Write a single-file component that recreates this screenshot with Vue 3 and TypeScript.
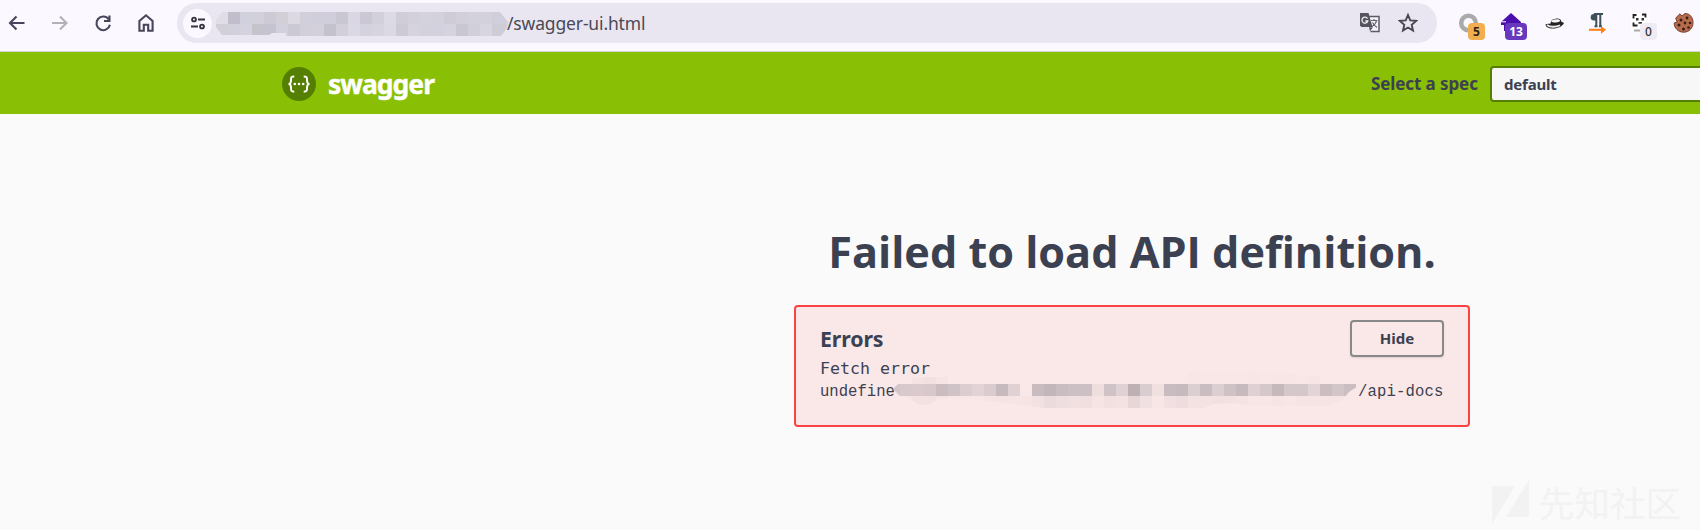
<script setup lang="ts">
interface Tile { x: number; y: number; c: string }

function row(start: number, y: number, colors: string): Tile[] {
  return colors.split(' ').map((c, i) => ({ x: start + i * 12, y, c: c === '-' ? 'none' : '#' + c }))
}

const hostTiles: Tile[] = [
  ...row(0, 0, 'e0dde7 c1bdca d0d1dc d2d0d8 cdcad5 d2cfd6 dcd9e3 d1cfda d0cedb d0cedb c9c7d2 d9d7e4 cbc8d3 d2d0da dcdae5 d0cdd9 d2d0da d4d2dd d3d1dc cfccd8 d1cfda d3d1dc d3d1dc d0ceda d0ceda'),
  ...row(0, 12, 'd2cfd7 d2d0da d3d2de c5c4cb c5c3cf d2d0dc cbc9d4 d2cfda d2d0db c4c2cd d2cfda dad8e5 d4d2dd d6d4df dbd9e4 cdcad5 d5d3dd d3d1dc d3d1de d5d3de c9c7d2 d1cfda d7d5df ceccd7 cfcdd9'),
]

const errorTiles: Tile[] = [
  ...row(0, 12, 'd3c5c9 d8c9cd dacacd d8c8cc cbbcc0 d0c3c7 dccdd0 e3d3d6 d9cbce c6babf e0d1d4 - c9bcc0 c3b6bb c9bdc1 cdc0c4 cdc0c4 efdede d0c3c7 e0d2d4 beb1b6 dacdd0 f0e0e0 c8bcc0 c7babe dccfd2 c9bdc1 dccfd2 cfc2c6 c7babe dfd1d3 d4c8cb c6b9bd d4c8cb d5c8cb e3d5d7 cbbec3 d3c6c9 cbbec3'),
  ...row(0, 24, '- f6e3e4 f3e0e1 f3e1e2 f6e3e4 f8e5e5 f8e5e5 f8e5e5 f6e3e4 f5e2e3 f6e4e4 f6e4e4 f3e1e1 ecdbdc efdedf f2e0e1 f0dfe0 f6e4e4 f2e0e1 f4e2e2 e6d6d8 f1e0e1 f8e5e5 f1dfe1 eedddf f4e2e3 f4e2e3 f1dfe1 f3e1e2 f5e2e3 f8e5e5 f8e5e5 f6e3e4 f8e5e5 f6e3e4 f6e4e4 f6e3e4 f6e3e3 f8e5e5'),
  ...row(24, 0, 'f5e2e3 f1dfe1 f6e3e4'),
  ...row(300, 0, 'f8e5e5 f9e6e6 f9e6e6 f9e6e6 f9e6e6 f8e5e5 f9e6e6 f8e5e5 f8e5e5 f9e6e6 f7e5e5'),
]
</script>

<template>
  <div class="page">
    <header class="toolbar">
      <nav class="nav">
        <svg class="ic" viewBox="0 0 20 20"><path d="M17.500 10H3.500M9.500 3.500 3 10l6.500 6.500" /></svg>
        <svg class="ic off" viewBox="0 0 20 20"><path d="M2 10h14M10 3.500 16.500 10 10 16.500" /></svg>
        <svg class="ic" viewBox="0 0 20 20"><path d="M15.700 6.300A6.800 6.800 0 1 0 16.900 11.700M16.500 2.500v5.500h-5.500" /></svg>
        <svg class="ic" viewBox="0 0 20 20"><path d="M3.400 17.800V8L10 2.300 16.600 8v9.800h-4.400v-6H7.800v6z" /></svg>
      </nav>
      <div class="address">
        <span class="site">
          <svg width="16" height="14" viewBox="0 0 16 14"><g fill="none" stroke="#34333f" stroke-width="1.900"><circle cx="4" cy="3.500" r="1.900" /><circle cx="12" cy="10.500" r="1.900" /><path d="M8 3.500h7M1 10.500h7" /></g></svg>
        </span>
        <svg class="host" width="292" height="28" viewBox="0 0 292 28">
          <defs><clipPath id="hostClip"><path d="M6 0H284l8 10-1 6-6 8H137V26H70V21H56l-3 2H6L0 15V8z" /></clipPath></defs>
          <g clip-path="url(#hostClip)" shape-rendering="crispEdges">
            <rect v-for="(t, i) in hostTiles" :key="i" :x="t.x" :y="t.y" width="12" height="12" :fill="t.c" />
          </g>
        </svg>
        <span class="path">/swagger-ui.html</span>
        <svg class="translate" width="22" height="22" viewBox="0 0 22 22">
          <path d="M9 4.500h11v15H11.500" fill="#f4f2f8" stroke="#5b5b65" stroke-width="1.500" />
          <path d="M1 1h8.500l4 14H2.500L1 13.500z" fill="#55545f" />
          <path d="M10 15.300h4l-3 4z" fill="#55545f" />
          <path d="M8.500 6.600A3 3 0 1 0 8.800 9H6.300" fill="none" stroke="#f1eff6" stroke-width="1.300" />
          <path d="M12 8.500h6.500M15 7v1.500M17.500 8.500c-.5 3-2 4.500-4.500 6M13.500 10.500c1 2 2.500 3.500 4.500 5" fill="none" stroke="#666570" stroke-width="1.200" />
        </svg>
        <svg class="star" width="20" height="20" viewBox="0 0 20 20"><path d="m10 2 2.300 5.400 5.800.5-4.400 3.900 1.300 5.700-5-3-5 3 1.300-5.700L1.900 7.900l5.800-.5z" fill="none" stroke="#474654" stroke-width="1.900" /></svg>
      </div>
      <div class="extensions">
        <div class="ext"><svg viewBox="0 0 22 22"><circle cx="10.500" cy="11" r="7.300" fill="none" stroke="#aaa" stroke-width="4.500" /></svg><b class="badge orange">5</b></div>
        <div class="ext"><svg viewBox="0 0 22 22"><path d="M10 1 20 10v3H17v6H3v-6H0v-3z" fill="#4b0fae" /><path d="M0 9.800h5" stroke="#fff" /></svg><b class="badge purple">13</b></div>
        <div class="ext"><svg viewBox="0 0 22 22"><path d="M1.500 12.500c2-1 4-.5 5-1 .5-3 2-5 4.500-4.500 3-1 6-.5 6.500 3 2 .3 2.500.8 2.300 1.500C18 14 15 16.500 9 16.500c-5 0-7.500-2-7.500-4z" fill="#232323" /><path d="M7.300 9.500c1-2 2-2 4-2 3-.5 4.500 0 5 1.500C14 10.500 9 11.500 7.300 9.500z" fill="#f5f5f5" /><path d="M3 13c3 2.300 9 2.300 13 .2" stroke="#ededed" stroke-width="1.800" fill="none" /></svg></div>
        <div class="ext"><svg viewBox="0 0 22 22"><path d="M9.500 2H7a3.300 3.300 0 0 0 0 6.600h2.500z" fill="#405058" /><path d="M7 2h9M9.300 2v12.500M13.300 2v12.500M7.500 14.300h3M12 14.300h3" fill="none" stroke="#405058" stroke-width="2" /><path d="M2 17.800h14" stroke="#ff7f11" stroke-width="2" /><path d="m14 13.900 5 3.900-5 3.900z" fill="#ff7f11" /></svg></div>
        <div class="ext"><svg viewBox="0 0 22 22"><path fill="#fff" d="M1 1h18v18H1z" /><path d="M3.500 6.500V3h3M12 2.500h3.500v3M3.500 10.500v3h4" fill="none" stroke="#222" stroke-width="1.800" /><path d="M4 18.500h6" stroke="#aaa" stroke-width="2" /><path d="M6 6h2.500v2.500H6zM11.500 6H14v2.500h-2.500zM8.500 10h3.500v1.800H8.500z" fill="#333" /></svg><b class="badge pale">0</b></div>
        <div class="ext"><svg viewBox="0 0 22 22"><path d="M7 1.800 9 4l3-2.500c5 0 8 4 8 9.200 0 5.500-4 9.500-9.300 9.500S1.200 16.300 1.200 11l3-1-1.500-4z" fill="#b96c4b" stroke="#70412f" /><g fill="#32201c"><circle cx="8" cy="8" r="1.500" /><circle cx="14" cy="6" r="1.400" /><circle cx="12" cy="11" r="1.400" /><circle cx="6" cy="13" r="1.500" /><circle cx="17" cy="11" r="1.300" /><circle cx="10.500" cy="17" r="1.500" /><circle cx="15.500" cy="15.500" r="1.300" /></g></svg></div>
      </div>
    </header>

    <div class="topbar">
      <div class="brand">
        <svg width="34" height="34" viewBox="0 0 34 34"><circle cx="17" cy="17" r="17" fill="#547f00" /><g fill="none" stroke="#fff" stroke-width="2"><path d="M12.300 9.500c-3 0-3.300.5-3.300 3.500 0 2.500-.5 4-2.500 4 2 0 2.500 1.500 2.500 4 0 3 .3 3.700 3.300 3.700M21.700 9.500c3 0 3.300.5 3.300 3.500 0 2.500.5 4 2.500 4-2 0-2.500 1.500-2.500 4 0 3-.3 3.700-3.300 3.700" /></g><g fill="#fff"><circle cx="12.800" cy="17" r="1.300" /><circle cx="17" cy="17" r="1.300" /><circle cx="21.200" cy="17" r="1.300" /></g></svg>
        <span class="brand-name">swagger</span>
      </div>
      <label class="spec"><span class="spec-label">Select a spec</span><span class="select">default</span></label>
    </div>

    <main class="content">
      <h4 class="title">Failed to load API definition.</h4>
      <section class="errors">
        <div class="errors-head">
          <h4 class="errors-title">Errors</h4>
          <button class="hide">Hide</button>
        </div>
        <div class="kind">Fetch error</div>
        <div class="message">
          <span class="mono">undefine</span>
          <svg class="redacted" width="468" height="36" viewBox="0 0 468 36">
            <defs><clipPath id="msgClip"><path d="M5 17 11 11 16 6 40 5H70V0H110V12H300V0H378L452 6V12H473L467 16 461 20 454 28 440 34H370L343 31 325 32 316 36H155L120 31 82 27H52L40 33 29 32 18 24H12z" /></clipPath></defs>
            <g clip-path="url(#msgClip)" shape-rendering="crispEdges">
              <rect v-for="(t, i) in errorTiles" :key="i" :x="t.x" :y="t.y" width="12" height="12" :fill="t.c" />
            </g>
          </svg>
          <span class="mono tail">/api-docs</span>
        </div>
      </section>
    </main>

    <div class="watermark">
      <svg width="38" height="44" viewBox="0 0 38 44"><path d="M0 6h23L0 44zM37 0v37H14z" fill="#f2f2f3" /></svg>
      <span>先知社区</span>
    </div>
  </div>
</template>

<style>
body { margin: 0; overflow: hidden; }
</style>

<style scoped>
.page { position: relative; width: 1700px; height: 530px; overflow: hidden; background: #fafafa; color: #3b4151; font-family: "Open Sans", sans-serif; }
.page * { box-sizing: border-box; }
.toolbar { display: flex; align-items: flex-start; height: 52px; padding-top: 3px; background: #fbf8ff; border-bottom: 1px solid #d5d2da; }
.nav { display: flex; gap: 23px; width: 177px; padding: 10px 0 0 7px; flex: none; }
.ic { width: 20px; height: 20px; fill: none; stroke: #47465a; stroke-width: 2.100; flex: none; }
.ic.off { stroke: #b3b1b8; }
.address { display: flex; align-items: center; width: 1260px; height: 40px; padding-left: 6px; border-radius: 20px; background: #e9e6f1; flex: none; }
.site { display: flex; align-items: center; justify-content: center; width: 29px; height: 29px; border-radius: 50%; background: #fbf8ff; }
.host { margin: 6px 0 0 4px; height: 28px; }
.path { flex: 1; font: 17.500px/24px "Noto Sans", sans-serif; letter-spacing: -.15px; color: #4b4956; margin-left: -1px; }
.translate { margin-right: 17px; }
.star { margin-right: 19px; }
.extensions { display: flex; gap: 21px; padding: 9px 0 0 21px; }
.ext { position: relative; width: 22px; height: 22px; flex: none; }
.ext svg { display: block; width: 22px; height: 22px; }
.badge { position: absolute; left: 10px; top: 11px; min-width: 17px; height: 17px; border-radius: 4px; text-align: center; font: bold 12px/17px "Noto Sans", sans-serif; }
.orange { background: #f2ae4e; color: #2c2418; }
.purple { left: 4px; width: 22px; background: #6939bd; color: #fff; }
.pale { background: #eeecf2; color: #333; font-weight: 500; }
.topbar { display: flex; justify-content: space-between; align-items: center; height: 62px; padding: 2px 0 0 282px; background: #89bf04; }
.brand { display: flex; align-items: center; gap: 12px; }
.brand-name { font: bold 26.500px/36px "Noto Sans", sans-serif; color: #fff; letter-spacing: -1px; -webkit-text-stroke: .4px #fff; }
.spec { display: flex; align-items: center; width: 329px; margin-top: -1px; }
.spec-label { flex: none; width: 119px; font: bold 17px/24px "Noto Sans", sans-serif; letter-spacing: -.1px; white-space: nowrap; }
.select { width: 260px; height: 36px; flex: none; border: 2px solid #547f00; border-radius: 4px; padding-left: 12px; background: #f7f7f7; font: bold 15px/32px "Noto Sans", sans-serif; letter-spacing: -.2px; }
.content { display: flex; flex-direction: column; align-items: center; width: 676px; margin-left: 794px; padding-top: 108px; }
.title { margin: 0; font-size: 43.200px; line-height: 60px; font-weight: 700; white-space: nowrap; }
.errors { width: 676px; height: 122px; margin-top: 23px; padding: 13px 24px; border: 2px solid #fb4343; border-radius: 4px; background: #fae7e7; }
.errors-head { display: flex; justify-content: space-between; align-items: center; height: 37px; }
.errors-title { margin: 0; font: bold 21.300px/28px "Noto Sans", sans-serif; letter-spacing: -.1px; }
.hide { width: 94px; height: 37px; padding: 0 0 2px; border: 2px solid #888; border-radius: 4px; background: transparent; color: #3b4151; font: bold 15px/28px "Noto Sans", sans-serif; box-shadow: 0 1px 2px rgba(0, 0, 0, .1); }
.kind { font: 16.600px/24px "DejaVu Sans Mono", monospace; height: 22px; }
.message { display: flex; height: 24px; }
.mono { flex: none; width: 76px; font: 15.600px/26px "Liberation Mono", monospace; white-space: nowrap; }
.redacted { flex: none; margin: -7px -6px 0 -8px; overflow: visible; }
.mono.tail { padding-left: 8px; letter-spacing: .15px; }
.watermark { position: absolute; left: 1492px; top: 480px; display: flex; gap: 9px; color: #f2f2f3; font: 400 35.500px/44px "Noto Sans CJK SC", sans-serif; white-space: nowrap; }
</style>
